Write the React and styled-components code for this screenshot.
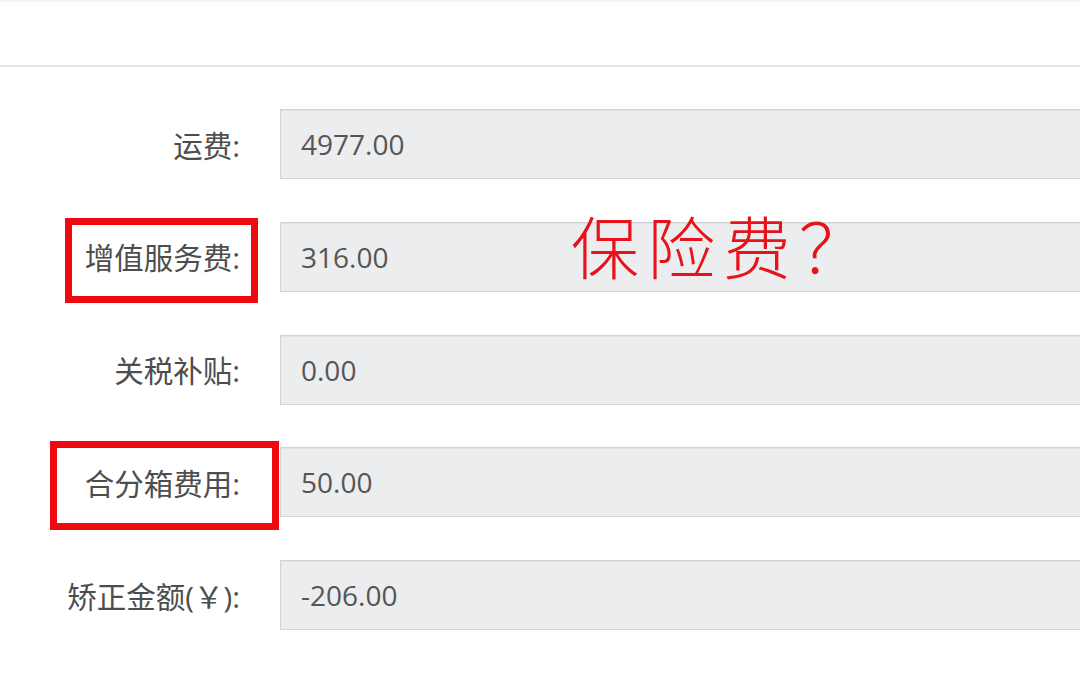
import React from 'react';
import styled, { createGlobalStyle } from 'styled-components';

const GlobalStyle = createGlobalStyle`
  html, body {
    margin: 0;
    padding: 0;
    background-color: #ffffff;
    overflow: hidden;
  }
  body {
    font-family: 'Open Sans', 'Noto Sans CJK SC', sans-serif;
  }
`;

const Page = styled.div`
  width: 1080px;
  height: 684px;
  overflow: hidden;
  background-color: #ffffff;
`;

const Header = styled.header`
  height: 63px;
  border-top: 2px solid #f3f3f3;
  border-bottom: 2px solid #e6e7e8;
`;

const Form = styled.form`
  display: flex;
  flex-direction: column;
  gap: 42.75px;
  padding-top: 42px;
`;

const Row = styled.div`
  position: relative;
  display: flex;
  align-items: center;
  height: 70px;
`;

const Label = styled.label`
  flex: none;
  width: 240px;
  padding-right: 40px;
  box-sizing: content-box;
  text-align: right;
  font-family: 'Open Sans', 'Noto Sans CJK SC', sans-serif;
  font-size: 29.5px;
  color: #4d4d4d;
  white-space: nowrap;
`;

const Field = styled.div`
  flex: 1;
  display: flex;
  align-items: center;
  height: 70px;
  margin-right: -10px;
  padding-left: 20px;
  box-sizing: border-box;
  background-color: #ecedef;
  border: 1px solid #d2d3d5;
  box-shadow: inset 0 1px 1px rgba(0, 0, 0, 0.05);
  font-family: 'Open Sans', sans-serif;
  font-size: 28px;
  color: #555555;
`;

const Highlight = styled.div`
  position: absolute;
  left: ${(p) => p.left}px;
  top: ${(p) => p.top}px;
  width: ${(p) => p.width}px;
  height: ${(p) => p.height}px;
  box-sizing: border-box;
  border: 7px solid #ee0a10;
  pointer-events: none;
`;

const Note = styled.span`
  position: absolute;
  left: 571px;
  top: -18px;
  font-family: 'Noto Sans CJK SC', sans-serif;
  font-weight: 300;
  font-size: 68px;
  line-height: 1.2;
  letter-spacing: 8px;
  color: #e8131a;
  white-space: nowrap;
`;

const rows = [
  { label: '运费:', value: '4977.00' },
  { label: '增值服务费:', value: '316.00', box: { left: 65, top: -4, width: 193, height: 85 }, note: '保险费？' },
  { label: '关税补贴:', value: '0.00' },
  { label: '合分箱费用:', value: '50.00', box: { left: 50, top: -6, width: 229, height: 89 } },
  { label: '矫正金额(￥):', value: '-206.00' },
];

const App = () => {
  return (
    <Page>
      <GlobalStyle />
      <Header />
      <Form onSubmit={(e) => e.preventDefault()}>
        {rows.map((row) => (
          <Row key={row.label}>
            <Label>{row.label}</Label>
            <Field>{row.value}</Field>
            {row.box && <Highlight {...row.box} />}
            {row.note && <Note>{row.note}</Note>}
          </Row>
        ))}
      </Form>
    </Page>
  );
};

export default App;
